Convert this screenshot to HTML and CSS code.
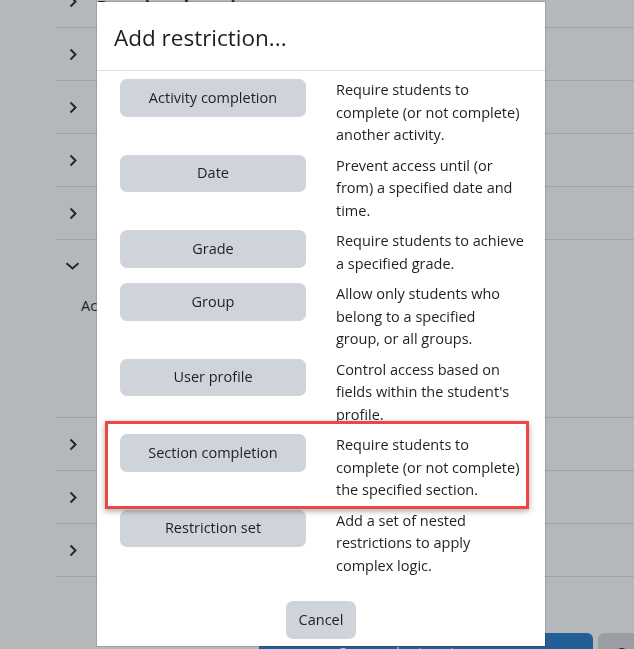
FILE: index.html
```html
<!DOCTYPE html>
<html lang="en">
<head>
    <meta charset="UTF-8">
    <meta name="viewport" content="width=device-width, initial-scale=1.0">
    <title>Add restriction</title>
    <link rel="stylesheet" href="styles.css">
</head>
<body>
    <div class="page">
        <ul class="sections">
            <li class="section">
                <svg class="chevron" width="8" height="13" viewBox="0 0 8 13"><path d="M1.5 1.5 L6.5 6.5 L1.5 11.5"/></svg>
                <span class="section-title">Restricted section content</span>
            </li>
            <li class="section">
                <svg class="chevron" width="8" height="13" viewBox="0 0 8 13"><path d="M1.5 1.5 L6.5 6.5 L1.5 11.5"/></svg>
            </li>
            <li class="section">
                <svg class="chevron" width="8" height="13" viewBox="0 0 8 13"><path d="M1.5 1.5 L6.5 6.5 L1.5 11.5"/></svg>
            </li>
            <li class="section">
                <svg class="chevron" width="8" height="13" viewBox="0 0 8 13"><path d="M1.5 1.5 L6.5 6.5 L1.5 11.5"/></svg>
            </li>
            <li class="section">
                <svg class="chevron" width="8" height="13" viewBox="0 0 8 13"><path d="M1.5 1.5 L6.5 6.5 L1.5 11.5"/></svg>
            </li>
            <li class="section expanded">
                <div class="section-head">
                    <svg class="chevron-down" width="15" height="8" viewBox="0 0 15 8"><path d="M1.5 1.2 L7.5 6.5 L13.5 1.2"/></svg>
                </div>
                <div class="section-body">Access restrictions</div>
            </li>
            <li class="section">
                <svg class="chevron" width="8" height="13" viewBox="0 0 8 13"><path d="M1.5 1.5 L6.5 6.5 L1.5 11.5"/></svg>
            </li>
            <li class="section">
                <svg class="chevron" width="8" height="13" viewBox="0 0 8 13"><path d="M1.5 1.5 L6.5 6.5 L1.5 11.5"/></svg>
            </li>
            <li class="section">
                <svg class="chevron" width="8" height="13" viewBox="0 0 8 13"><path d="M1.5 1.5 L6.5 6.5 L1.5 11.5"/></svg>
            </li>
        </ul>

        <div class="page-actions">
            <button class="btn-save">Save and return to course</button>
            <button class="btn-cancel-page">Cancel</button>
        </div>
    </div>

    <div class="modal">
        <div class="modal-header">
            <h5 class="modal-title">Add restriction...</h5>
        </div>
        <div class="modal-body">
            <div class="option">
                <button class="option-btn">Activity completion</button>
                <div class="option-desc">Require students to<br>complete (or not complete)<br>another activity.</div>
            </div>
            <div class="option">
                <button class="option-btn">Date</button>
                <div class="option-desc">Prevent access until (or<br>from) a specified date and<br>time.</div>
            </div>
            <div class="option">
                <button class="option-btn">Grade</button>
                <div class="option-desc">Require students to achieve<br>a specified grade.</div>
            </div>
            <div class="option">
                <button class="option-btn">Group</button>
                <div class="option-desc">Allow only students who<br>belong to a specified<br>group, or all groups.</div>
            </div>
            <div class="option">
                <button class="option-btn">User profile</button>
                <div class="option-desc">Control access based on<br>fields within the student's<br>profile.</div>
            </div>
            <div class="option">
                <button class="option-btn">Section completion</button>
                <div class="option-desc">Require students to<br>complete (or not complete)<br>the specified section.</div>
            </div>
            <div class="option">
                <button class="option-btn">Restriction set</button>
                <div class="option-desc">Add a set of nested<br>restrictions to apply<br>complex logic.</div>
            </div>
        </div>
        <div class="modal-footer">
            <button class="option-btn btn-cancel">Cancel</button>
        </div>

        <!-- screenshot annotation -->
        <div class="highlight"></div>
    </div>
</body>
</html>
```

FILE: styles.css
```css
body {
    margin: 0;
    padding: 0;
    font-family: "Open Sans", "Noto Sans", sans-serif;
    font-size: 14.5px;
    background: #b5b8bb;
    color: #1b1f23;
    overflow: hidden;
    height: 649px;
}

/* page behind the backdrop */
.sections {
    list-style: none;
    margin: -25px 0 0 56px;
    padding: 0;
}

.section {
    height: 52px;
    border-bottom: 1px solid #9fa3a7;
    display: flex;
    align-items: center;
    padding-left: 13px;
}

.chevron,
.chevron-down {
    fill: none;
    stroke: #23282d;
    stroke-width: 2;
    flex-shrink: 0;
}

.section-title {
    margin-left: 20px;
    margin-top: 12px;
    font-size: 18px;
    font-weight: 700;
    color: #23282d;
}

.section.expanded {
    height: 177px;
    display: block;
    padding-left: 9px;
}

.section-head {
    height: 52px;
    display: flex;
    align-items: center;
}

.section-body {
    padding-left: 16px;
    margin-top: 3px;
    line-height: 22.5px;
}

.page-actions {
    display: flex;
    gap: 5px;
    margin: 56px 0 0 259px;
    overflow: hidden;
}

.page-actions button {
    flex-shrink: 0;
    font-family: inherit;
    font-size: 14.5px;
    height: 38px;
    border: none;
    border-radius: 6px;
    padding: 0 12px;
}

.btn-save {
    width: 334px;
    background: #235f96;
    color: #b7c5d3;
}

.btn-cancel-page {
    width: 90px;
    background: #9a9ea3;
    color: #23282d;
    text-align: left;
    padding-left: 18px !important;
}

/* modal */
.modal {
    position: fixed;
    top: 2px;
    left: 97px;
    width: 448px;
    background: #fff;
    box-shadow: 0 0 0 1px rgba(0, 0, 0, 0.12);
}

.modal-header {
    height: 68px;
    padding: 0 17px;
    display: flex;
    align-items: center;
    border-bottom: 1px solid #dee2e6;
}

.modal-title {
    margin: 0;
    font-size: 22.5px;
    font-weight: 400;
    color: #1b1f23;
    padding-top: 3px;
}

.modal-body {
    padding: 8px 23px 0;
}

.option {
    display: grid;
    grid-template-columns: 186px 1fr;
    column-gap: 30px;
    align-items: start;
    margin-bottom: 8px;
}

.option-btn {
    font-family: inherit;
    font-size: 14.5px;
    line-height: 22.5px;
    padding: 7.5px 12px;
    border: none;
    border-radius: 7px;
    background: #ced4da;
    color: #1d2125;
    cursor: pointer;
}

.option-desc {
    line-height: 22.5px;
    color: #1d2125;
    white-space: nowrap;
}

.modal-footer {
    display: flex;
    justify-content: center;
    padding: 16px 0 7.5px;
}

.btn-cancel {
    width: 70px;
    padding-left: 0;
    padding-right: 0;
}

.highlight {
    position: absolute;
    left: 8px;
    top: 419px;
    width: 424px;
    height: 88px;
    box-sizing: border-box;
    border: 3px solid #ef4545;
    box-shadow: 0 2px 6px rgba(0, 0, 0, 0.35);
    pointer-events: none;
}
```
